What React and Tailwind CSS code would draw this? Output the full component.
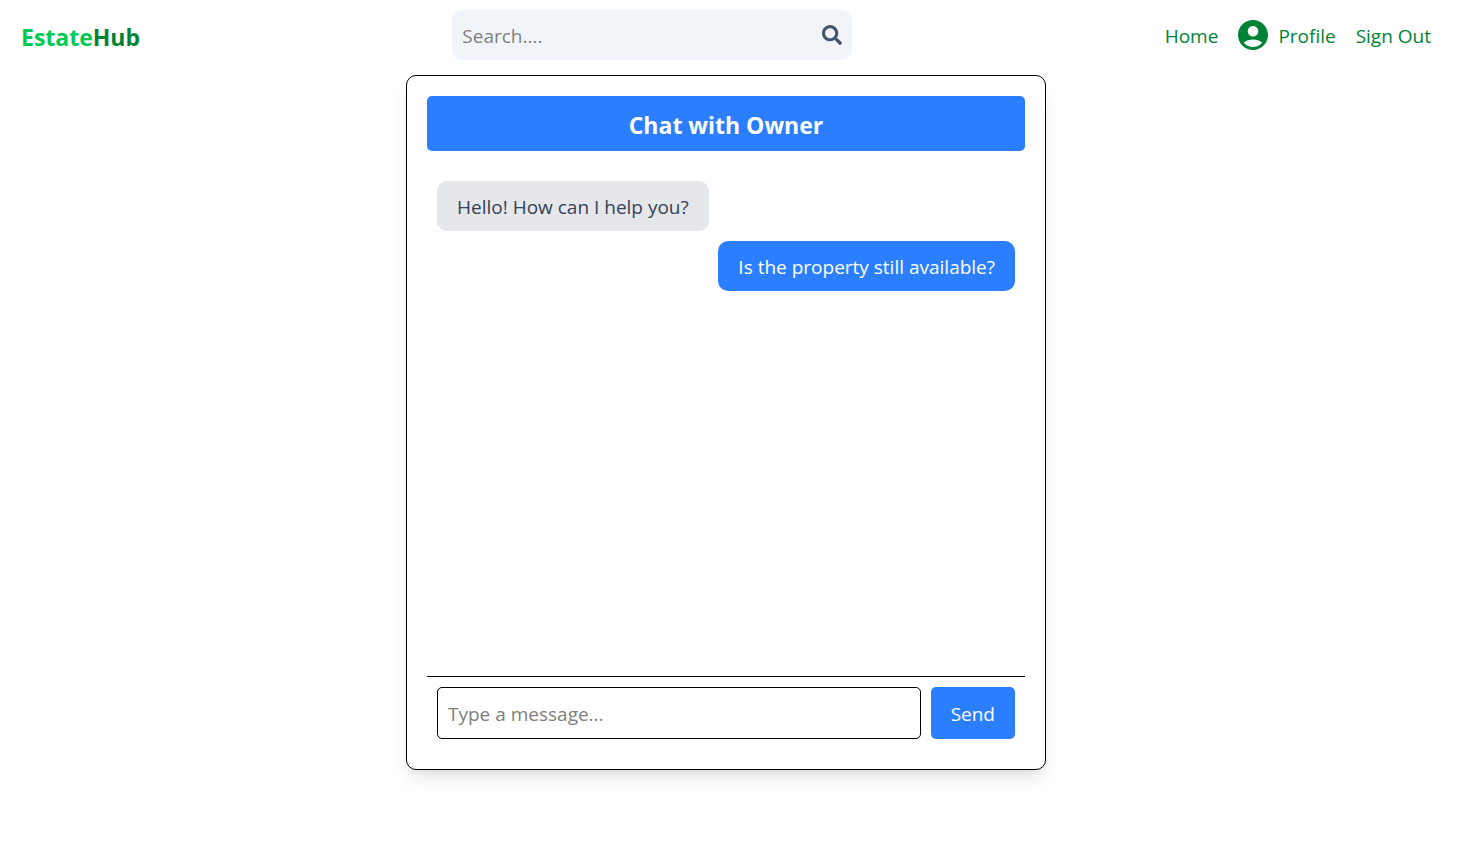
import { FaSearch } from "react-icons/fa";

const messages = [
  { id: 1, text: "Hello! How can I help you?", mine: false },
  { id: 2, text: "Is the property still available?", mine: true },
];

function AccountIcon() {
  return (
    <svg viewBox="2 2 20 20" fill="currentColor" aria-hidden="true" className="size-[30px]">
      <path d="M12 2C6.48 2 2 6.48 2 12s4.48 10 10 10 10-4.48 10-10S17.52 2 12 2zm0 4c1.93 0 3.5 1.57 3.5 3.5S13.93 13 12 13s-3.5-1.57-3.5-3.5S10.07 6 12 6zm0 14c-2.03 0-4.43-.82-6.14-2.88C7.55 15.8 9.68 15 12 15s4.45.8 6.14 2.12C16.43 19.18 14.03 20 12 20z" />
    </svg>
  );
}

function NavBar() {
  return (
    <header className="flex items-center justify-between px-[21px] py-2.5">
      <a href="#" className="pt-[3px] text-[23px] leading-8 font-bold">
        <span className="text-green-500">Estate</span>
        <span className="text-green-700">Hub</span>
      </a>
      <form className="flex h-[50px] w-[400px] items-center rounded-[10px] bg-slate-100 px-2.5">
        <input
          type="text"
          aria-label="Search"
          placeholder="Search...."
          className="min-w-0 flex-1 bg-transparent pt-0.5 leading-[30px] outline-none placeholder:text-[#808080]"
        />
        <button type="button" aria-label="Submit search">
          <FaSearch className="size-5 text-slate-600" />
        </button>
      </form>
      <nav className="flex items-center gap-5 text-green-700">
        <a href="#" className="pt-0.5">Home</a>
        <a href="#" className="flex items-center gap-2.5">
          <AccountIcon />
          <span className="pt-0.5">Profile</span>
        </a>
        <a href="#" className="pt-0.5">Sign Out</a>
      </nav>
    </header>
  );
}

function Message({ text, mine }) {
  return (
    <li
      className={
        mine
          ? "self-end rounded-[10px] bg-[#2b7fff] px-5 pt-[11px] pb-[9px] text-white"
          : "self-start rounded-[10px] bg-gray-200 px-5 pt-[11px] pb-[9px] text-gray-700"
      }
    >
      {text}
    </li>
  );
}

export default function App() {
  return (
    <div className="min-h-screen bg-white pr-8 pb-10 font-['Open_Sans',sans-serif] text-[19px] leading-[30px]">
      <NavBar />
      <main className="mx-auto mt-[5px] flex max-w-[640px] flex-col rounded-[10px] border border-black bg-white p-5 shadow-[0_12px_19px_-4px_rgb(0_0_0/0.1),0_5px_8px_-5px_rgb(0_0_0/0.1)]">
        <h1 className="rounded-[5px] bg-[#2b7fff] px-2.5 pt-3 pb-2 text-center text-[23px] leading-[35px] font-bold text-white">
          Chat with Owner
        </h1>
        <ul className="mt-5 flex min-h-[505px] flex-col gap-2.5 p-2.5">
          {messages.map((m) => (
            <Message key={m.id} text={m.text} mine={m.mine} />
          ))}
        </ul>
        <form className="flex gap-2.5 border-t border-black p-2.5">
          <input
            type="text"
            aria-label="Message"
            placeholder="Type a message..."
            className="min-w-0 flex-1 rounded-[5px] border border-black px-2.5 pt-[11px] pb-[9px] leading-[30px] outline-none placeholder:text-[#808080]"
          />
          <button type="button" className="rounded-[5px] bg-[#2b7fff] px-5 pt-0.5 text-white">
            Send
          </button>
        </form>
      </main>
    </div>
  );
}
